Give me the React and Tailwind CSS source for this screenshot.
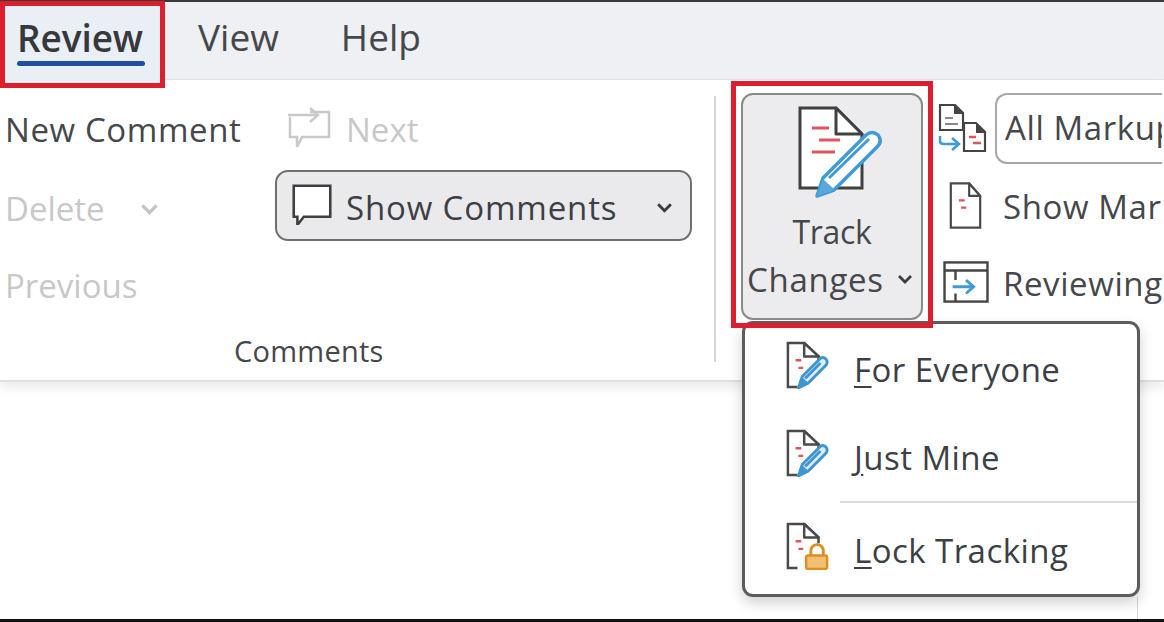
const font = { fontFamily: '"Open Sans","Noto Sans",sans-serif' };

function Doc({ className }) {
  return (
    <svg viewBox="0 0 44 64" className={className} fill="none">
      <path d="M2 2H27L42 19V62H2Z" fill="#fff" stroke="#4a4a4a" strokeWidth="3" />
      <path d="M27 2V19H42Z" fill="#fff" stroke="#4a4a4a" strokeWidth="3" strokeLinejoin="round" />
      <path d="M13 25h8M16 35h7" stroke="#e0525c" strokeWidth="3" />
    </svg>
  );
}

function PenDoc({ lock }) {
  return (
    <svg viewBox="0 0 46 50" className="w-[44px] h-[48px] mb-[8px]" fill="none">
      <path d="M12 48H2V2H19L34 16V22" fill="#fff" stroke="#4a4a4a" strokeWidth="2.6" />
      <path d="M19 2V16H34Z" fill="#fff" stroke="#4a4a4a" strokeWidth="2.6" strokeLinejoin="round" />
      <path d="M10 20h6M13 28h5" stroke="#e0525c" strokeWidth="2.6" />
      {lock ? (
        <>
          <path d="M26 36V30a6.500 6.500 0 0 1 13 0V36" stroke="#d98f22" strokeWidth="3" fill="#fff" />
          <rect x="21" y="35" width="22" height="14" rx="2" fill="#f0c070" stroke="#d98f22" strokeWidth="2.500" />
        </>
      ) : (
        <>
          <path d="M13 49L17 37L36 18Q39 16 42 19Q44 22 42 25L23 44Z" fill="#dcecf7" stroke="#3f95cf" strokeWidth="3" strokeLinejoin="round" />
          <path d="M13 49L17 38L24 44Z" fill="#3f95cf" />
          <path d="M20 39L36 23" stroke="#3f95cf" strokeWidth="3" />
        </>
      )}
    </svg>
  );
}

function Chevron({ className, color = "#3c3c3c" }) {
  return (
    <svg viewBox="0 0 16 10" className={className} fill="none">
      <path d="M2 2L8 8L14 2" stroke={color} strokeWidth="2.800" />
    </svg>
  );
}

function MenuItem({ letter, rest, lock }) {
  return (
    <div className="flex items-center h-[88px] pl-[41px]">
      <PenDoc lock={lock} />
      <span className="ml-[24px] text-[33px] leading-none text-[#3c3f45] tracking-[0.45px]">
        <span className="underline underline-offset-[4px] decoration-2">{letter}</span>
        {rest}
      </span>
    </div>
  );
}

export default function App() {
  return (
    <div style={font} className="relative w-[1164px] h-[622px] overflow-hidden bg-white">
      <div className="h-[2px] bg-[#3a3a3a]" />
      <div className="flex h-[78px] bg-[#eef0f3] border-b border-[#e2e4e6] text-[37px] text-[#45474b]">
        <div className="relative w-[165px] h-[87px] -mt-[1px] border-[5px] border-[#dc1f2e] bg-[#e9eff5] pl-[12px] pt-[8px] leading-[48px] font-semibold text-[#36383b] tracking-[-0.1px] z-10">
          Review
          <div className="w-[128px] h-[5px] -mt-[1px] rounded-full bg-[#1e4fa0]" />
        </div>
        <div className="ml-[33px] pt-[11px] leading-[48px]">View</div>
        <div className="ml-[62px] pt-[11px] leading-[48px]">Help</div>
      </div>

      <div className="relative flex h-[302px] border-b-2 border-[#dfdfdf] shadow-[0_6px_10px_rgba(0,0,0,0.08)]">
        <div className="flex flex-col w-[716px] h-[266px] mt-[16px] border-r-2 border-[#d6d6d6] relative">
          <div className="flex h-[78px] items-start">
            <div className="w-[272px] pl-[5px] pt-[12px] text-[33px] leading-[44px] text-[#45474b] tracking-[0.6px]">New Comment</div>
            <div className="flex items-center pt-[8px] pl-[14px]">
              <svg viewBox="0 0 46 44" className="w-[46px] h-[44px]" fill="none" stroke="#c9c9c9" strokeWidth="2.500">
                <path d="M24 6H43V31H16L11 41V31H4V11" />
                <path d="M2 9H31M24 2L32 9L24 16" />
              </svg>
              <span className="ml-[14px] mt-[4px] text-[33px] leading-[44px] text-[#c8c8c8]">Next</span>
            </div>
          </div>
          <div className="flex h-[78px] items-start">
            <div className="w-[275px] flex items-center pl-[5px] pt-[13px] text-[#c8c8c8]">
              <span className="w-[135px] text-[33px] leading-[44px]">Delete</span>
              <Chevron className="w-[19px] h-[12px]" color="#c4c4c4" />
            </div>
            <div className="flex items-center w-[417px] h-[71px] -mt-[4px] border-2 border-[#6f6f6f] rounded-[13px] bg-[#eaeaec] pl-[13px] text-[33px] text-[#3c3f45]">
              <svg viewBox="0 0 46 46" className="w-[44px] h-[42px] mb-[4px]" fill="none">
                <path d="M3 3H43V37H14L7 46V37H3Z" fill="#fff" stroke="#3f3f3f" strokeWidth="2.800" />
              </svg>
              <span className="ml-[12px] mt-[4px] w-[310px] tracking-[0.85px]">Show Comments</span>
              <Chevron className="w-[17px] h-[11px] mt-[3px]" />
            </div>
          </div>
          <div className="h-[78px] pl-[5px] pt-[12px] text-[33px] leading-[44px] text-[#c8c8c8]">Previous</div>
          <div className="pl-[234px] pt-[10px] text-[29px] leading-[22px] text-[#45474b] tracking-[0.25px]">Comments</div>
        </div>

        <div className="relative ml-[15px] w-[202px] h-[247px] mt-[1px] border-[5px] border-[#dc1f2e] pl-[5px] pt-[7px] z-20">
          <div className="flex flex-col items-center w-[182px] h-[227px] border-2 border-[#8a8a8a] rounded-[12px] bg-[#ececee] text-[32px] text-[#45474b]">
            <svg viewBox="0 0 86 92" className="w-[86px] h-[92px] mt-[11px] self-start ml-[55px] shrink-0" fill="none">
              <path d="M2 2H38L64 28V82H2Z" fill="#fff" stroke="#404040" strokeWidth="3" strokeLinejoin="miter" />
              <path d="M38 2V28H64Z" fill="#fff" stroke="#404040" strokeWidth="3" strokeLinejoin="round" />
              <path d="M14 22H31M21 34H42M14 46H37" stroke="#e0525c" strokeWidth="3" />
              <path d="M19 90L25 72L68 29Q74 24 80 29Q85 35 79 41L36 84Z" fill="#fff" stroke="#3f9ad6" strokeWidth="3.500" strokeLinejoin="round" />
              <path d="M19 90L25 73L37 84Z" fill="#5aa7d8" />
              <path d="M31 72L71 33" stroke="#3f9ad6" strokeWidth="3" />
            </svg>
            <div className="mt-[10px] leading-[48px] tracking-[-0.3px]">Track</div>
            <div className="flex items-center self-start ml-[4px] text-[33px] leading-[48px] tracking-[0.7px]">
              Changes
              <Chevron className="ml-[13px] w-[16px] h-[10px] -mt-[3px]" />
            </div>
          </div>
        </div>

        <div className="flex flex-col w-[229px] mt-[12px] text-[33px] text-[#45474b] tracking-[0.6px] overflow-hidden">
          <div className="flex items-center h-[72px] pl-[5px] whitespace-nowrap">
            <svg viewBox="0 0 50 50" className="w-[50px] h-[50px] shrink-0" fill="none">
              <path d="M2 2H17L25 10V27H2Z" fill="#fff" stroke="#444" strokeWidth="2.200" />
              <path d="M16 2V11H25Z" fill="#444" />
              <path d="M7 15h8M7 21h13" stroke="#888" strokeWidth="2" />
              <path d="M26 20H38L47 29V48H26Z" fill="#fff" stroke="#444" strokeWidth="2.200" />
              <path d="M38 20V30H47Z" fill="#444" />
              <path d="M31 34h7M35 40h8" stroke="#e0525c" strokeWidth="2.500" />
              <path d="M2 33V38Q2 41 6 41H20M14 35L21 41L14 47" stroke="#3f9ad6" strokeWidth="2.500" />
            </svg>
            <div className="ml-[7px] h-[71px] w-[200px] shrink-0 border-2 border-r-0 border-[#a8a8a8] rounded-l-[12px] pl-[8px] flex items-center">All Markup</div>
          </div>
          <div className="flex items-center h-[86px] pl-[14px] whitespace-nowrap">
            <Doc className="w-[37px] h-[47px] shrink-0 mb-[4px]" />
            <span className="ml-[19px]">Show Markup</span>
          </div>
          <div className="flex items-center h-[68px] pl-[10px] whitespace-nowrap">
            <svg viewBox="0 0 48 44" className="w-[46px] h-[42px] shrink-0 mb-[4px]" fill="none">
              <rect x="1.500" y="1.500" width="45" height="41" fill="#fff" stroke="#444" strokeWidth="2.500" />
              <path d="M1.500 10H46M13 10V20M13 34V43" stroke="#444" strokeWidth="2.500" />
              <path d="M10 27H31M24 20L32 27L24 34" stroke="#3f9ad6" strokeWidth="3" />
            </svg>
            <span className="ml-[14px]">Reviewing Pane</span>
          </div>
        </div>
      </div>

      <div className="absolute left-[742px] top-[321px] w-[398px] h-[276px] z-10 rounded-[11px] border-[3px] border-[#5c5c5c] bg-white shadow-[0_6px_14px_rgba(0,0,0,0.18)] pt-[1px]">
        <MenuItem letter="F" rest="or Everyone" />
        <MenuItem letter="J" rest="ust Mine" />
        <div className="ml-[95px] h-[2px] bg-[#dcdcdc]" />
        <div className="mt-[3px]">
          <MenuItem letter="L" rest="ock Tracking" lock />
        </div>
      </div>

      <div className="absolute left-[1137px] top-[597px] w-[1px] h-[22px] bg-[#d4d4d4]" />
      <div className="absolute left-0 right-0 bottom-0 h-[3px] bg-[#111]" />
    </div>
  );
}
